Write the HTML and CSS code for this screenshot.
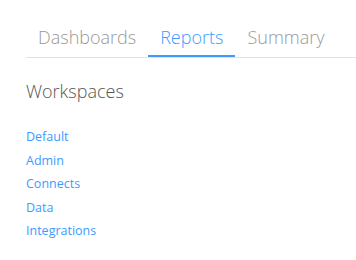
FILE: index.html
```html
<!DOCTYPE html>
<html lang="en">
<head>
  <meta charset="UTF-8">
  <title>Workspaces</title>
  <link rel="stylesheet" href="styles.css">
</head>
<body>
  <div class="page">
    <ul class="tabs">
      <li><a href="#">Dashboards</a></li>
      <li class="active"><a href="#">Reports</a></li>
      <li><a href="#">Summary</a></li>
    </ul>
    <h2 class="title">Workspaces</h2>
    <ul class="links">
      <li><a href="#">Default</a></li>
      <li><a href="#">Admin</a></li>
      <li><a href="#">Connects</a></li>
      <li><a href="#">Data</a></li>
      <li><a href="#">Integrations</a></li>
    </ul>
  </div>
</body>
</html>
```
FILE: styles.css
```css
body {
  margin: 0;
  font-family: "Open Sans", Arial, sans-serif;
  background-color: #fff;
}
.page {
  padding: 21px 0 0 26px;
}
.tabs {
  list-style: none;
  margin: 0;
  padding: 0;
  display: flex;
  border-bottom: 1px solid #e3e3e3;
}
.tabs li {
  border-bottom: 2px solid transparent;
}
.tabs a {
  display: block;
  padding: 0 12px 2px;
  font-size: 18px;
  font-weight: 300;
  line-height: 32px;
  color: #999;
  text-decoration: none;
}
.tabs .active {
  border-bottom-color: #3d9bff;
}
.tabs .active a {
  color: #3d9bff;
}
.title {
  margin: 20px 0 0;
  font-size: 18px;
  font-weight: 300;
  line-height: 26px;
  color: #555;
}
.links {
  list-style: none;
  margin: 21px 0 0;
  padding: 0;
}
.links li {
  font-size: 12.5px;
  line-height: 23.5px;
}
.links a {
  color: #3d9bff;
  text-decoration: none;
}
```
